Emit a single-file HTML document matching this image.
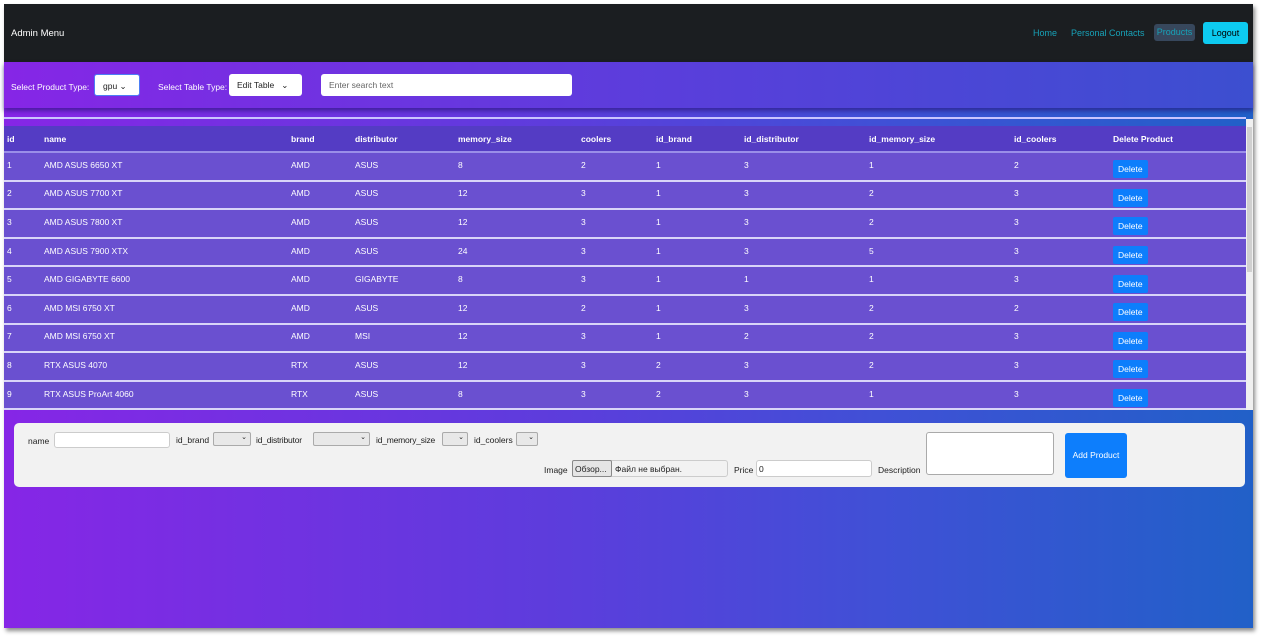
<!DOCTYPE html>
<html><head><meta charset="utf-8"><style>
*{box-sizing:border-box;margin:0;padding:0}
body{width:1265px;height:641px;background:#fff;font-family:"Liberation Sans",sans-serif;font-size:9px;position:relative;overflow:hidden}
#frame{position:absolute;left:4px;top:4px;width:1249px;height:624px;background:linear-gradient(90deg,#8626e6 0%,#5c3ddc 45%,#4050d6 70%,#2160c8 100%);box-shadow:2px 3px 4px rgba(0,0,0,.45)}
#nav{position:absolute;left:0;top:0;width:1249px;height:58px;background:#1b1e21;color:#fff}
#nav .brand{position:absolute;left:7px;top:24px;font-size:9.5px}
#nav a{position:absolute;top:24px;color:#17a2b8;font-size:9px}
.prod{position:absolute;left:1150px;top:20px;width:41px;height:17px;background:#37475c;border-radius:3px;color:#17a2b8;font-size:9px;text-align:center;line-height:17px}
.logout{position:absolute;left:1199px;top:18px;width:45px;height:22px;background:#0dcaf0;border-radius:3px;color:#000;text-align:center;line-height:22px;font-size:9px}
#tb{position:absolute;left:0;top:58px;width:1249px;height:46px;background:linear-gradient(90deg,#8626e6,#5c3ddc 50%,#3c4fd0);box-shadow:0 3px 4px rgba(40,20,120,.6)}
.lbl{position:absolute;color:#fff;font-size:8.5px;top:20px}
.sel{position:absolute;background:#fff;border-radius:3px;height:22px;top:12px;font-size:8.5px;line-height:22px;padding-left:8px;color:#222}
#line{position:absolute;left:0;top:113px;width:1242px;height:2px;background:#c9c4ff}
table{position:absolute;left:0;top:122px;width:1242px;border-collapse:collapse;color:#fff;font-size:8.5px}
th{background:#543cc4;height:26px;text-align:left;font-weight:bold;border-bottom:2px solid #9a8ee8}
td{background:#6a50d0;height:28.6px;border-bottom:2px solid #d8d4f8;vertical-align:middle;padding-bottom:3px}
td,th{padding-left:3px}
.del{display:inline-block;background:#0d7efc;color:#fff;padding:4px 5px;border-radius:2px;margin-top:5px;position:relative;top:2px}
#sb{position:absolute;left:1242px;top:115px;width:7px;height:291px;background:#f0f0f0}
#sb div{position:absolute;left:1px;top:8px;width:5px;height:145px;background:#d0d0d0}
#form{position:absolute;left:10px;top:419px;width:1231px;height:64px;background:#f2f2f2;border-radius:5px;font-size:8.5px;color:#222}
.f{position:absolute}
.in{position:absolute;background:#fff;border:1px solid #ccc;border-radius:3px}
.s{position:absolute;background:#e8e8e8;border:1px solid #aaa;border-radius:2px;height:14px;font-size:7px;text-align:right;padding-right:3px}
</style></head><body>
<div id="frame">
<div id="nav"><span class="brand">Admin Menu</span><a style="left:1029px">Home</a><a style="left:1067px">Personal Contacts</a><div class="prod">Products</div><div class="logout">Logout</div></div>
<div id="tb">
<span class="lbl" style="left:7px">Select Product Type:</span>
<div class="sel" style="left:90px;width:46px;border:1px solid #4d7ef5">gpu ⌄</div>
<span class="lbl" style="left:154px">Select Table Type:</span>
<div class="sel" style="left:225px;width:73px">Edit Table &nbsp;&nbsp;⌄</div>
<div class="sel" style="left:317px;width:251px;color:#666">Enter search text</div>
</div>
<div id="line"></div>
<table>
<tr><th style="width:37px">id</th><th style="width:247px">name</th><th style="width:64px">brand</th><th style="width:103px">distributor</th><th style="width:123px">memory_size</th><th style="width:75px">coolers</th><th style="width:88px">id_brand</th><th style="width:125px">id_distributor</th><th style="width:145px">id_memory_size</th><th style="width:99px">id_coolers</th><th>Delete Product</th></tr>
<tr><td>1</td><td>AMD ASUS 6650 XT</td><td>AMD</td><td>ASUS</td><td>8</td><td>2</td><td>1</td><td>3</td><td>1</td><td>2</td><td><span class="del">Delete</span></td></tr>
<tr><td>2</td><td>AMD ASUS 7700 XT</td><td>AMD</td><td>ASUS</td><td>12</td><td>3</td><td>1</td><td>3</td><td>2</td><td>3</td><td><span class="del">Delete</span></td></tr>
<tr><td>3</td><td>AMD ASUS 7800 XT</td><td>AMD</td><td>ASUS</td><td>12</td><td>3</td><td>1</td><td>3</td><td>2</td><td>3</td><td><span class="del">Delete</span></td></tr>
<tr><td>4</td><td>AMD ASUS 7900 XTX</td><td>AMD</td><td>ASUS</td><td>24</td><td>3</td><td>1</td><td>3</td><td>5</td><td>3</td><td><span class="del">Delete</span></td></tr>
<tr><td>5</td><td>AMD GIGABYTE 6600</td><td>AMD</td><td>GIGABYTE</td><td>8</td><td>3</td><td>1</td><td>1</td><td>1</td><td>3</td><td><span class="del">Delete</span></td></tr>
<tr><td>6</td><td>AMD MSI 6750 XT</td><td>AMD</td><td>ASUS</td><td>12</td><td>2</td><td>1</td><td>3</td><td>2</td><td>2</td><td><span class="del">Delete</span></td></tr>
<tr><td>7</td><td>AMD MSI 6750 XT</td><td>AMD</td><td>MSI</td><td>12</td><td>3</td><td>1</td><td>2</td><td>2</td><td>3</td><td><span class="del">Delete</span></td></tr>
<tr><td>8</td><td>RTX ASUS 4070</td><td>RTX</td><td>ASUS</td><td>12</td><td>3</td><td>2</td><td>3</td><td>2</td><td>3</td><td><span class="del">Delete</span></td></tr>
<tr><td>9</td><td>RTX ASUS ProArt 4060</td><td>RTX</td><td>ASUS</td><td>8</td><td>3</td><td>2</td><td>3</td><td>1</td><td>3</td><td><span class="del">Delete</span></td></tr>
</table>
<div id="sb"><div></div></div>
<div id="form">
<span class="f" style="left:14px;top:13px">name</span><div class="in" style="left:40px;top:9px;width:116px;height:16px"></div>
<span class="f" style="left:162px;top:12px">id_brand</span><div class="s" style="left:199px;top:9px;width:38px">⌄</div>
<span class="f" style="left:242px;top:12px;letter-spacing:-0.2px">id_distributor</span><div class="s" style="left:299px;top:9px;width:57px">⌄</div>
<span class="f" style="left:362px;top:12px;letter-spacing:-0.2px">id_memory_size</span><div class="s" style="left:428px;top:9px;width:26px">⌄</div>
<span class="f" style="left:460px;top:12px">id_coolers</span><div class="s" style="left:502px;top:9px;width:22px">⌄</div>
<span class="f" style="left:530px;top:42px">Image</span>
<div class="in" style="left:558px;top:37px;width:156px;height:17px;background:#f2f2f2"></div>
<div class="f" style="left:558px;top:37px;width:40px;height:17px;background:#e5e5e5;border:1px solid #888;border-radius:2px;padding:3px 2px">Обзор...</div>
<span class="f" style="left:601px;top:41px">Файл не выбран.</span>
<span class="f" style="left:720px;top:42px">Price</span><div class="in" style="left:742px;top:37px;width:116px;height:17px;padding:3px 2px">0</div>
<span class="f" style="left:864px;top:42px">Description</span><div class="in" style="left:912px;top:9px;width:128px;height:43px;border-color:#aaa"></div>
<div class="f" style="left:1051px;top:10px;width:62px;height:45px;background:#0d7efc;border-radius:3px;color:#fff;text-align:center;line-height:45px">Add Product</div>
</div>
</div>
</body></html>
